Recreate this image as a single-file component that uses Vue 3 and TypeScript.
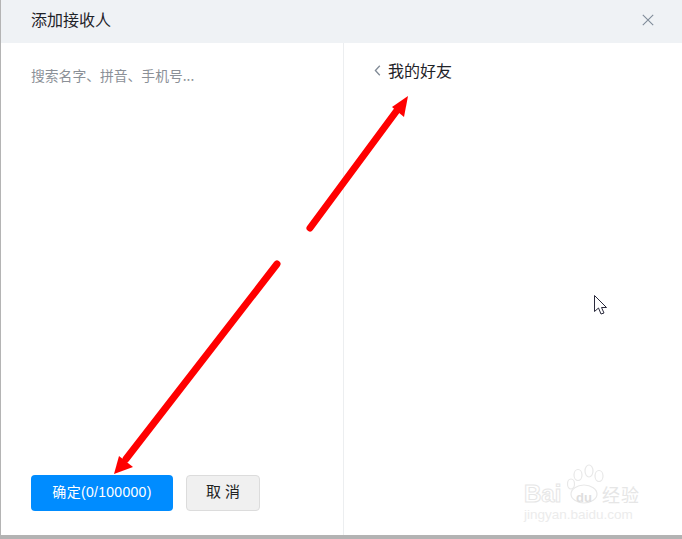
<script setup lang="ts">
const title = '添加接收人'
const placeholder = '搜索名字、拼音、手机号...'
const friends = '我的好友'
</script>

<template>
  <div class="page">
    <div class="dialog">
      <header class="head">
        <span class="title">{{ title }}</span>
        <svg class="close" width="12" height="12" viewBox="0 0 12 12" fill="none" stroke="#7f8b99" stroke-width="1.1">
          <path d="M.8.8l10.4 10.4M11.2.8L.8 11.2" />
        </svg>
      </header>
      <div class="body">
        <section class="left">
          <div class="search">{{ placeholder }}</div>
          <div class="actions">
            <button class="btn primary">确定(0/100000)</button>
            <button class="btn ghost">取 消</button>
          </div>
        </section>
        <section class="right">
          <div class="crumb">
            <svg width="7" height="11" viewBox="0 0 7 11" fill="none" stroke="#808a96" stroke-width="1.3">
              <path d="M5.8.8L1.4 5.5l4.4 4.7" />
            </svg>
            <span>{{ friends }}</span>
          </div>
        </section>
      </div>
    </div>
    <div class="floor"></div>

    <svg class="overlay" width="682" height="539" viewBox="0 0 682 539">
      <g stroke="#ff0000" stroke-width="7" stroke-linecap="round" fill="none">
        <path d="M310 228L398 109" />
        <path d="M277 264L126 459" />
      </g>
      <path d="M408 96L392 107L404 117Z" fill="#ff0000" />
      <path d="M114 474L119 456L133 467Z" fill="#ff0000" />
      <!-- cursor -->
      <path d="M594.5 295.5V311.5L598.5 308L601 314L604 313L601.5 307.5H606.5Z" fill="#fff" stroke="#2a2a3c" stroke-width="1" />
      <!-- watermark paw -->
      <g fill="#fff" stroke="#e8e8e8" stroke-width="1.2">
        <ellipse cx="578" cy="475" rx="4" ry="5.5" />
        <ellipse cx="589" cy="471" rx="4" ry="6" />
        <ellipse cx="599" cy="476" rx="4" ry="5.5" />
        <ellipse cx="571" cy="484" rx="3.5" ry="5" />
        <ellipse cx="584" cy="494" rx="13" ry="9" />
      </g>
    </svg>
    <div class="mark">
      <div class="mark-top">
        <span class="bai">Bai</span><span class="du">du</span><span class="jy">经验</span>
      </div>
      <div class="mark-url">jingyan.baidu.com</div>
    </div>
  </div>
</template>

<style>
html, body { margin: 0; background: #fff; }
</style>

<style scoped>
.page {
  position: relative;
  width: 682px;
  height: 539px;
  overflow: hidden;
  display: flex;
  flex-direction: column;
  font-family: "Noto Sans CJK SC", "Liberation Sans", sans-serif;
  background: #fff;
}
.dialog {
  flex: 1;
  min-height: 0;
  display: flex;
  flex-direction: column;
  margin-left: 1px;
  box-shadow: -1px 0 0 #b4b4b4;
}
.floor {
  height: 4px;
  background: #b3b3b3;
}
.head {
  height: 43px;
  flex: none;
  background: #eff2f5;
  display: flex;
  align-items: center;
  justify-content: space-between;
  padding: 0 28px 5px 30px;
  box-sizing: border-box;
}
.title {
  font-size: 16px;
  color: #1f2329;
  line-height: 20px;
}
.close { margin-top: 2px; }
.body {
  flex: 1;
  min-height: 0;
  display: flex;
}
.left {
  width: 343px;
  flex: none;
  box-sizing: border-box;
  border-right: 1px solid #eceef0;
  padding: 23px 0 24px 30px;
  display: flex;
  flex-direction: column;
  justify-content: space-between;
}
.search {
  font-size: 13.8px;
  line-height: 18px;
  color: #8b9097;
}
.actions {
  display: flex;
  gap: 13px;
}
.btn {
  height: 36px;
  font-family: "Liberation Sans", "Noto Sans CJK SC", sans-serif;
  font-size: 14px;
  padding: 0 0 5px;
  border-radius: 4px;
  box-sizing: border-box;
}
.primary {
  width: 142px;
  background: #008cff;
  color: #fff;
  border: none;
  letter-spacing: 0.3px;
}
.ghost {
  width: 74px;
  background: #f0f0f0;
  color: #222;
  border: 1px solid #dcdcdc;
  font-size: 15px;
}
.right {
  flex: 1;
  padding: 17px 0 0 30px;
}
.crumb {
  display: flex;
  align-items: center;
  gap: 7px;
  font-size: 16px;
  line-height: 20px;
  color: #1f2329;
}
.overlay {
  position: absolute;
  inset: 0;
  pointer-events: none;
}
.mark {
  position: absolute;
  left: 524px;
  top: 482px;
  width: 130px;
  color: #fff;
  font-family: "Liberation Sans", "Noto Sans CJK SC", sans-serif;
}
.mark-top {
  display: flex;
  align-items: baseline;
  height: 23px;
  line-height: 23px;
}
.bai { font-size: 24px; font-weight: 700; width: 48px; -webkit-text-stroke: 1px #e6e6e6; }
.du { font-size: 13px; font-weight: 700; width: 24px; margin-left: 0; text-align: center; color: #dedede; }
.jy { font-size: 18px; font-weight: 400; letter-spacing: 1px; white-space: nowrap; margin-left: 6px; color: #e6e6e6; }
.mark-url {
  font-size: 13.5px;
  line-height: 14px;
  margin-top: 3px;
  white-space: nowrap;
  color: #ececec;
}
</style>
